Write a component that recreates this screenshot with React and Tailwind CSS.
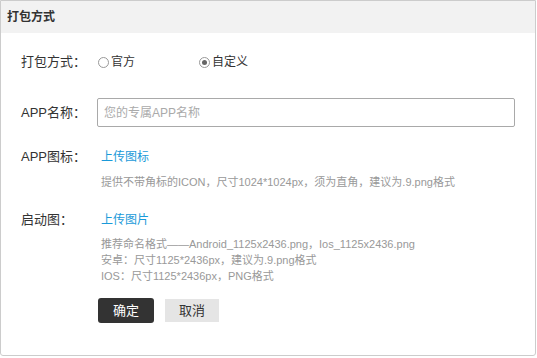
import React from "react";

const font = { fontFamily: '"Liberation Sans", "Noto Sans CJK SC", sans-serif' };

const Radio = ({ checked, label, className }) => (
  <label className={`flex items-center gap-[2px] text-[12px] text-[#333] ${className || ""}`}>
    <span className="flex h-[11px] w-[11px] items-center justify-center rounded-full border border-[#999] bg-white">
      {checked && <span className="h-[5px] w-[5px] rounded-full bg-[#666]" />}
    </span>
    <span>{label}</span>
  </label>
);

export default function App() {
  return (
    <div className="bg-white" style={font}>
      <div className="h-[356px] w-[536px] overflow-hidden rounded-b-[3px] border border-[#cccccc]">
        {/*Header*/}
        <div className="flex h-[32px] items-center bg-[#f2f2f2] px-[6px] text-[12px] font-bold text-[#333]">
          打包方式
        </div>

        {/*Form*/}
        <div className="pl-[20px] pr-[20px] pt-[17px]">
          <div className="flex h-[24px] items-center">
            <p className="w-[77px] text-[13px] text-[#333]">打包方式：</p>
            <Radio label="官方" className="w-[101px]" />
            <Radio label="自定义" checked />
          </div>

          <div className="mt-[24px] flex items-center">
            <p className="w-[76px] text-[13px] text-[#333]">APP名称：</p>
            <input
              type="text"
              placeholder="您的专属APP名称"
              className="h-[29px] w-[418px] rounded-[2px] border border-[#a9a9a9] px-[6px] text-[12px] text-[#333] outline-none placeholder:text-[#aaa]"
            />
          </div>

          <div className="mt-[20px] flex h-[20px] items-center">
            <p className="w-[80px] text-[13px] text-[#333]">APP图标：</p>
            <a className="text-[12px] text-[#1a9ad9]">上传图标</a>
          </div>
          <p className="mt-[7px] pl-[80px] text-[11px] leading-[16px] text-[#999]">
            提供不带角标的ICON，尺寸1024*1024px，须为直角，建议为.9.png格式
          </p>

          <div className="mt-[20px] flex h-[20px] items-center">
            <p className="w-[80px] text-[13px] text-[#333]">启动图：</p>
            <a className="text-[12px] text-[#1a9ad9]">上传图片</a>
          </div>
          <div className="mt-[6px] pl-[80px] text-[11px] leading-[16px] text-[#999]">
            <p>推荐命名格式——Android_1125x2436.png，Ios_1125x2436.png</p>
            <p>安卓：尺寸1125*2436px，建议为.9.png格式</p>
            <p>IOS：尺寸1125*2436px，PNG格式</p>
          </div>

          <div className="mt-[14px] flex gap-[11px] pl-[77px]">
            <button className="h-[25px] w-[56px] rounded-[3px] bg-[#333] text-[13px] text-white">确定</button>
            <button className="mt-[1px] h-[23px] w-[54px] bg-[#e5e5e5] text-[13px] text-[#333]">取消</button>
          </div>
        </div>
      </div>
    </div>
  );
}
